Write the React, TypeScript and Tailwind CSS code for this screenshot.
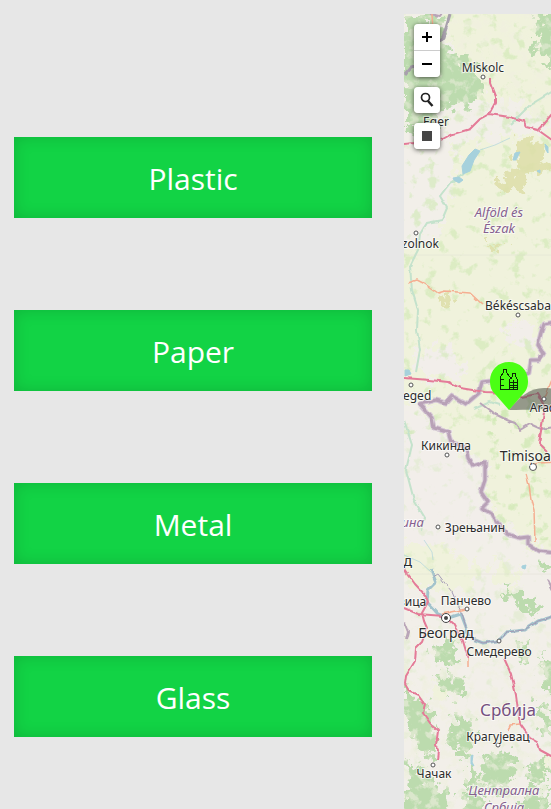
import React from "react";

const categories = ["Plastic", "Paper", "Metal", "Glass"];

type Label = {
  text: string;
  x: number;
  y: number;
  size: number;
  kind?: "region" | "country";
};

const labels: Label[] = [
  { text: "Miskolc", x: 483, y: 72, size: 12 },
  { text: "Eger", x: 436, y: 126, size: 12 },
  { text: "Alföld és", x: 499, y: 217, size: 13, kind: "region" },
  { text: "Észak", x: 499, y: 233, size: 13, kind: "region" },
  { text: "Szolnok", x: 417, y: 248, size: 12 },
  { text: "Békéscsaba", x: 518, y: 310, size: 12 },
  { text: "Szeged", x: 411, y: 400, size: 12 },
  { text: "Arad", x: 543, y: 412, size: 12 },
  { text: "Кикинда", x: 446, y: 450, size: 12 },
  { text: "Timișoara", x: 532, y: 461, size: 14 },
  { text: "Војводина", x: 393, y: 527, size: 13, kind: "region" },
  { text: "Зрењанин", x: 475, y: 532, size: 12 },
  { text: "Нови Сад", x: 380, y: 566, size: 14 },
  { text: "Митровица", x: 393, y: 606, size: 12 },
  { text: "Панчево", x: 466, y: 605, size: 12 },
  { text: "Београд", x: 446, y: 638, size: 14 },
  { text: "Смедерево", x: 499, y: 656, size: 12 },
  { text: "Србија", x: 508, y: 716, size: 17, kind: "country" },
  { text: "Крагујевац", x: 498, y: 741, size: 12 },
  { text: "Чачак", x: 434, y: 778, size: 12 },
  { text: "Централна", x: 504, y: 795, size: 13, kind: "region" },
  { text: "Србија", x: 504, y: 812, size: 13, kind: "region" },
];

const towns = [
  [483, 77], [416, 233], [518, 315], [411, 385], [544, 399],
  [447, 455], [438, 527], [467, 609], [499, 641], [498, 745], [433, 765],
];

const border =
  "M555 322L544 324L541 333L538 345L543 353L539 360L531 360L529 373L516 378L482 382L479 393L466 404L452 396L446 403L436 400L420 404L432 418L434 428L448 432L451 442L466 447L468 458L473 466L485 462L485 480L481 492L488 502L482 508L492 514L497 522L507 534L520 538L528 537L528 544L538 551L555 553";

const roads = [
  "M404 144L415 143L428 144M441 140L450 135L470 129L480 119L489 114L510 117L524 121L526 127L538 130L552 114M489 114L495 103L495 96L490 83L490 77M538 130L552 140",
  "M404 378L430 380L448 382L460 388L485 392L507 393L521 397L538 394L545 406L542 425L539 443L547 451",
  "M404 569L415 584L426 596L428 602L422 613L424 621L427 628L422 642L416 648L415 661L406 676L405 684L409 691L418 695L425 705L423 713L430 723L438 731L436 745L439 751L438 760M404 608L418 614L444 616L453 624L463 641L468 658",
  "M504 658L511 674L516 695L520 724L530 738L537 742L540 750L553 757",
];

const orangeRoads =
  "M408 283L417 280L425 284L438 293L445 291L470 293L483 305M526 474L529 485L531 500L534 510L535 542M531 465L539 463L555 462M442 614L466 609M468 658L468 668M508 731L510 725L520 724M545 397L553 377M433 32L432 14";

function MapTerrain() {
  return (
    <svg aria-hidden="true" className="absolute inset-0 h-full w-full">
      <defs>
        <filter id="ragged" x="-10%" y="-10%" width="120%" height="120%" colorInterpolationFilters="sRGB">
          <feTurbulence type="fractalNoise" baseFrequency="0.11" numOctaves="4" seed="4" result="noise" />
          <feDisplacementMap in="SourceGraphic" in2="noise" scale="30" xChannelSelector="R" yChannelSelector="G" />
        </filter>
        <filter id="speckles" x="0" y="0" width="100%" height="100%" colorInterpolationFilters="sRGB">
          <feTurbulence type="fractalNoise" baseFrequency="0.08" numOctaves="4" seed="11" />
          <feColorMatrix values="0 0 0 0 0.80  0 0 0 0 0.91  0 0 0 0 0.69  0 7 0 0 -4.1" />
        </filter>
        <filter id="clearings" x="0" y="0" width="100%" height="100%" colorInterpolationFilters="sRGB">
          <feTurbulence type="fractalNoise" baseFrequency="0.1" numOctaves="4" seed="23" />
          <feColorMatrix values="0 0 0 0 0.94  0 0 0 0 0.94  0 0 0 0 0.88  0 6 0 0 -3" />
        </filter>
        <filter id="wobble" x="-10%" y="-10%" width="120%" height="120%" colorInterpolationFilters="sRGB">
          <feTurbulence type="fractalNoise" baseFrequency="0.14" numOctaves="1" seed="8" result="noise" />
          <feDisplacementMap in="SourceGraphic" in2="noise" scale="4" xChannelSelector="R" yChannelSelector="G" />
        </filter>
      </defs>
      <g transform="translate(-404 -14)">
        <rect x="404" y="14" width="2000" height="2000" fill="#f2efe9" />
        <g fill="#f0f2dc" filter="url(#ragged)">
          <path d="M445 0H570V105L535 118L515 100L480 100L455 50Z" />
          <path d="M455 145L570 125V560L528 545L485 500L485 465L450 440L425 405L390 395V250L440 240L452 200Z" />
          <path d="M400 540L440 545L480 570L470 590L430 592L400 575ZM490 560L520 570L515 590L495 585ZM540 755H560V775H540Z" />
          <path d="M430 680L450 690L440 705L425 695Z" />
        </g>
        <g fill="#f2eeea" filter="url(#ragged)">
          <path d="M412 355L440 345L462 358L465 378L425 382ZM505 325L530 320L535 345L510 348ZM404 418L425 418L465 460L480 500L500 535L455 540L404 545Z" />
        </g>
        <rect x="404" y="14" width="2000" height="420" filter="url(#speckles)" opacity="0.55" />
        <rect x="485" y="410" width="2000" height="130" filter="url(#speckles)" opacity="0.55" />
        <rect x="404" y="430" width="2000" height="400" filter="url(#speckles)" opacity="0.3" />
        <g fill="#bcdbae" filter="url(#ragged)">
          <path d="M404 14H448L440 35L452 52L475 62L482 92L470 106L445 108L425 140L404 125Z" />
          <path d="M540 14H565V68L548 66L535 50Z" />
          <path d="M502 585L515 594L538 602L535 615L514 606ZM545 564L556 562V580L544 574Z" />
          <path d="M404 685L425 705L438 730L432 760L420 750L404 720ZM410 760L430 780L450 790L445 825L404 825Z" />
          <path d="M452 720L470 718L475 742L466 758L450 748ZM486 755L510 750L515 775L505 797L484 785ZM528 765L544 755L545 785L532 788ZM430 650L452 640L460 665L445 670ZM515 640L530 645L528 665L518 660ZM468 765L480 770L478 790L468 785ZM540 655L556 670V698L545 690ZM440 675L465 678L462 696L446 696Z" />
          <path d="M465 790L490 798L480 820H460ZM538 700L555 715V740L540 728ZM522 790L551 795V820H525Z" />
        </g>
        <rect x="404" y="14" width="2000" height="110" filter="url(#clearings)" opacity="0.5" />
        <rect x="404" y="625" width="2000" height="1200" filter="url(#clearings)" opacity="0.6" />
        <g fill="#dedfa9" opacity="0.85" filter="url(#ragged)">
          <path d="M513 142L538 140L546 165L526 174L523 190L506 196L498 184L505 172L518 164Z" />
          <path d="M440 298L456 296L448 306L438 307ZM488 246L505 240L498 250Z" />
        </g>
        <g fill="none" stroke="#c4e2cc" strokeWidth="2" filter="url(#wobble)">
          <path d="M464 174L450 183L440 196L447 208L442 220L427 223L420 234L418 250L410 266L412 290L418 310L417 330L420 350L416 372" />
          <path d="M404 420L412 445L406 470L414 500L425 518L422 530M510 125L530 105L555 90M500 405L490 402L474 409" />
        </g>
        <g fill="#a6d1dc" stroke="#a6d1dc" strokeWidth="1">
          <path d="M475 149L480 151L474 160L470 171L463 174L462 166L469 155Z" />
          <path d="M453 178L459 177L463 180L459 183L454 180ZM515 153L520 152L516 160L513 160ZM545 144L548 147L548 153L546 150ZM537 171L540 170L540 173ZM471 756L473 755L472 762L474 766L471 764ZM522 566L526 565L525 569L522 568ZM405 370L409 370L411 374L405 376Z" />
          <path d="M480 150L495 145L510 138M404 555L420 562L431 572M424 540L432 552L433 560" fill="none" opacity="0.6" />
        </g>
        <g fill="none" strokeLinejoin="round" filter="url(#wobble)">
          <path d="M431 570L436 582L428 590L427 602L438 614L448 618L461 614L466 627L470 638L483 643L498 641L507 632L524 630L538 621L555 616" stroke="#a3c3cc" strokeWidth="3" />
          <path d="M470 638L483 643L498 641L507 632L524 630L538 621L555 616M433 577L438 574L444 582L452 592L456 601L462 614L466 627" stroke="#a39ab5" strokeWidth="1" />
          <path d="M480 403L493 413L507 420L515 423L520 430L530 424L541 429L555 427" stroke="#b9a5b8" strokeWidth="2" />
          <path d="M404 75L411 67L421 65L432 51L443 37L450 14" stroke="#a8a0ad" strokeWidth="3" />
          <path d="M430 14L440 16L444 10M548 580L555 594M404 622L408 632L406 640" stroke="#b9a5b8" strokeWidth="2" />
          <path d={border} stroke="#d7cad6" strokeWidth="5" />
          <path d={border} stroke="#b8a1b7" strokeWidth="3" />
        </g>
        <g fill="none" strokeLinejoin="round" filter="url(#wobble)">
          {roads.map((road) => (
            <path key={road} d={road} stroke="#e47b98" strokeWidth="2" />
          ))}
          <path d={orangeRoads} stroke="#f5ae91" strokeWidth="1.5" />
        </g>
        <path d="M404 255H2400M404 574H2400" stroke="#d8d8cc" strokeWidth="1" opacity="0.35" />
        <path d="M509 410C519 397 530 388 544 388C558 388 568 393 568 399C568 407 556 410 509 410Z" fill="#4b5047" opacity="0.55" />
        {towns.map(([x, y]) => (
          <circle key={x + "-" + y} cx={x} cy={y} r="2" fill="#fff" stroke="#555" />
        ))}
        <circle cx="533" cy="467" r="3.5" fill="#fff" stroke="#555" />
        <circle cx="446" cy="618" r="4.5" fill="#fff" stroke="#444" />
        <circle cx="446" cy="618" r="2" fill="#444" />
        {labels.map(({ text, x, y, size, kind }) => (
          <text
            key={text + y}
            x={x}
            y={y}
            textAnchor="middle"
            fontSize={size}
            fontFamily="'Noto Sans', sans-serif"
            fontStyle={kind === "region" ? "italic" : "normal"}
            fill={kind === "region" ? "#85608f" : kind === "country" ? "#75507f" : "#2c2c2c"}
            stroke="#fff"
            strokeOpacity="0.65"
            strokeWidth="2"
            strokeLinejoin="round"
            paintOrder="stroke"
          >
            {text}
          </text>
        ))}
      </g>
    </svg>
  );
}

function BottleMarker() {
  return (
    <button type="button" aria-label="Plastic recycling point" className="absolute top-[348px] left-[86px]">
      <svg width="38" height="48" viewBox="0 0 38 48" className="block">
        <path d="M19 48L5 32C1 28 0 24 0 19C0 8 8 0 19 0S38 8 38 19C38 24 37 28 33 32Z" fill="#4bff14" />
        <g fill="none" stroke="#0b2606" strokeWidth="1" shapeRendering="crispEdges">
          <path d="M13.500 10.500V7.500H16.500V10.500L19.500 14.500M13.500 10.500L10.500 14.500V27.500H18.500M10.500 17.500H14M10.500 23.500H14" />
          <path d="M22.500 14.500V11.500H25.500V14.500L27.500 17.500V27.500H19.500V17.500L22.500 14.500M19.500 14.500L22.500 17.500M20 20.500H27M20 23.500H27M20 25.500H27M23.500 18V27" />
        </g>
      </svg>
    </button>
  );
}

const control = "flex w-[26px] items-center justify-center bg-white text-black";
const panel = "flex flex-col overflow-hidden rounded shadow-[0_1px_5px_rgba(0,0,0,0.65)]";

function MapControls() {
  return (
    <div className="absolute top-[10px] left-[10px] flex flex-col gap-[10px]">
      <div className={panel}>
        <button type="button" aria-label="Zoom in" className={control + " h-[27px] border-b border-[#ccc]"}>
          <svg width="12" height="12" viewBox="0 0 12 12">
            <path d="M6 1V11M1 6H11" stroke="currentColor" strokeWidth="2" />
          </svg>
        </button>
        <button type="button" aria-label="Zoom out" className={control + " h-[26px]"}>
          <svg width="12" height="12" viewBox="0 0 12 12">
            <path d="M1 6H11" stroke="currentColor" strokeWidth="2" />
          </svg>
        </button>
      </div>
      <div className={panel}>
        <button type="button" aria-label="Search" className={control + " h-[26px]"}>
          <svg width="16" height="16" viewBox="0 0 16 16" fill="none" stroke="#222">
            <circle cx="6.500" cy="5.500" r="4" strokeWidth="1.700" />
            <path d="M9 9L13.500 14" strokeWidth="2.500" />
          </svg>
        </button>
      </div>
      <div className={panel}>
        <button type="button" aria-label="Draw a rectangle" className={control + " h-[26px]"}>
          <svg width="10" height="10" viewBox="0 0 10 10">
            <rect width="10" height="10" fill="#464646" />
          </svg>
        </button>
      </div>
    </div>
  );
}

export default function App() {
  return (
    <div className="grid min-h-screen grid-cols-[11fr_4fr] bg-[#e7e7e7]">
      <nav aria-label="Waste categories" className="flex flex-col gap-[92px] pt-[137px] pr-8 pl-[14px]">
        {categories.map((category) => (
          <button
            key={category}
            type="button"
            className="h-[81px] w-full bg-[#12d345] pt-[2px] font-['Open_Sans','Noto_Sans',sans-serif] text-[30px] text-white shadow-[inset_0_0_16px_rgba(0,0,0,0.15)]"
          >
            {category}
          </button>
        ))}
      </nav>
      <main className="relative mt-[14px] overflow-hidden">
        <MapTerrain />
        <BottleMarker />
        <MapControls />
      </main>
    </div>
  );
}
